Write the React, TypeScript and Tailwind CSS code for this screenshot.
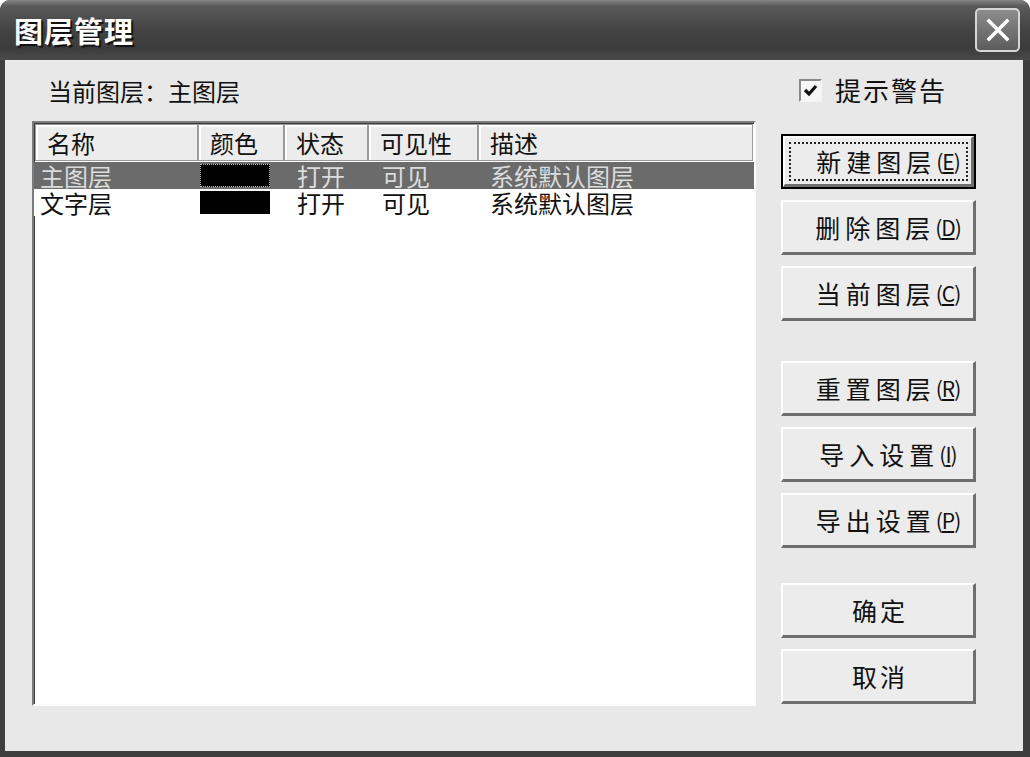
import React from 'react';

const FONT = { fontFamily: '"Noto Sans CJK SC", "Noto Sans", sans-serif' };

const columns = [
  { label: '名称', width: 'w-[163px]' },
  { label: '颜色', width: 'w-[86px]' },
  { label: '状态', width: 'w-[84px]' },
  { label: '可见性', width: 'w-[110px]' },
  { label: '描述', width: 'w-[275px]' },
];

const layers = [
  { name: '主图层', state: '打开', visible: '可见', desc: '系统默认图层', selected: true },
  { name: '文字层', state: '打开', visible: '可见', desc: '系统默认图层', selected: false },
];

type BtnProps = {
  text: string;
  hotkey?: string;
  isDefault?: boolean;
  className?: string;
};

const DialogButton: React.FC<BtnProps> = ({ text, hotkey, isDefault, className = '' }) => {
  return (
    <div
      className={`relative h-[55px] w-[195px] bg-[#ececec] ${
        isDefault ? 'border-2 border-black' : ''
      } ${className}`}
    >
      <div className="flex h-full w-full items-center justify-center border-t-2 border-l-2 border-b-[3px] border-r-[3px] border-t-white border-l-white border-b-[#6e6e6e] border-r-[#6e6e6e]">
        {hotkey ? (
          <span className="flex items-center pl-[20px] text-[25px] leading-[30px] text-[#111]">
            <span className="tracking-[5px]">{text}</span>
            <span className="text-[21px] tracking-[-1px]">
              (<span className="underline underline-offset-2">{hotkey}</span>)
            </span>
          </span>
        ) : (
          <span className="pl-[4px] text-[25px] leading-[30px] tracking-[3px] text-[#111]">{text}</span>
        )}
      </div>
      {isDefault && (
        <div className="pointer-events-none absolute inset-[6px] border-2 border-dotted border-[#222]" />
      )}
    </div>
  );
};

const App: React.FC = () => {
  return (
    <div className="min-h-screen bg-white" style={FONT}>
      <div className="flex h-[757px] w-[1030px] flex-col overflow-hidden rounded-t-[10px] bg-[#3e3e3e]">
        {/* Title bar */}
        <div className="flex h-[60px] shrink-0 items-center bg-[linear-gradient(to_bottom,#858585_0%,#5a5a5a_10%,#434343_50%,#3c3c3c_80%,#4a4a4a_100%)] pl-[14px] pr-[10px]">
          <span className="text-[29px] font-bold leading-none tracking-[1px] text-white [text-shadow:2px_2px_1px_#111]">
            图层管理
          </span>
          <div className="ml-auto flex h-[44px] w-[45px] items-center justify-center rounded-[5px] border-2 border-[#d6d6d6] bg-[linear-gradient(to_bottom,#8c8c8c,#5c5c5c)]">
            <svg width="28" height="28" viewBox="0 0 28 28">
              <path d="M5 5 L23 23 M23 5 L5 23" stroke="white" strokeWidth="3.5" strokeLinecap="square" />
            </svg>
          </div>
        </div>

        {/* Body */}
        <div className="mb-[6px] ml-[5px] mr-[7px] flex flex-1 bg-[#e8e8e8]">
          {/* Left column */}
          <div className="flex w-[751px] flex-col pl-[27px] pt-[17px]">
            <div className="h-[28px] pl-[16px] text-[24px] leading-[28px] text-[#111]">当前图层：主图层</div>
            <div className="mt-[16px] h-[585px] w-[724px] border-2 border-t-[#7c7c7c] border-l-[#7c7c7c] border-b-[#fbfbfb] border-r-[#fbfbfb] bg-white shadow-[inset_1px_1px_0_#3a3a3a]">
              {/* Header */}
              <div className="flex h-[38px] pt-[1px] pl-[1px]">
                {columns.map((c) => (
                  <div
                    key={c.label}
                    className={`${c.width} flex items-center border border-[#9a9a9a] bg-[#ececec] pl-[11px] text-[24px] leading-[30px] text-[#111] shadow-[inset_2px_2px_0_#ffffff]`}
                  >
                    {c.label}
                  </div>
                ))}
              </div>
              {/* Rows */}
              <div className="pt-[1px]">
                {layers.map((l) => (
                  <div
                    key={l.name}
                    className={`flex h-[27px] items-center text-[24px] leading-[27px] ${
                      l.selected ? 'bg-[#6b6b6b] text-[#dcdcdc]' : 'bg-white text-[#111]'
                    }`}
                  >
                    <div className="w-[163px] pl-[6px]">{l.name}</div>
                    <div className="flex w-[86px] items-center pl-[3px]">
                      <div
                        className={`h-[23px] w-[70px] bg-black ${
                          l.selected ? 'border border-dotted border-[#bbbbbb]' : ''
                        }`}
                      />
                    </div>
                    <div className="w-[84px] pl-[14px]">{l.state}</div>
                    <div className="w-[110px] pl-[15px]">{l.visible}</div>
                    <div className="w-[275px] pl-[13px]">{l.desc}</div>
                  </div>
                ))}
              </div>
            </div>
          </div>

          {/* Right column */}
          <div className="ml-[25px] flex w-[195px] flex-col pt-[16px]">
            <div className="flex h-[28px] items-center pl-[18px]">
              <div className="flex h-[23px] w-[23px] items-center justify-center border-2 border-t-[#8a8a8a] border-l-[#8a8a8a] border-b-[#f4f4f4] border-r-[#f4f4f4] bg-[#f6f6f6]">
                <svg width="15" height="15" viewBox="0 0 15 15">
                  <path d="M2 7 L6 11 L13 3" stroke="#111" strokeWidth="3.2" fill="none" />
                </svg>
              </div>
              <span className="ml-[13px] text-[26px] leading-[30px] tracking-[2px] text-[#111]">提示警告</span>
            </div>

            <div className="mt-[30px] flex flex-col gap-[11px]">
              <DialogButton text="新建图层" hotkey="E" isDefault />
              <DialogButton text="删除图层" hotkey="D" />
              <DialogButton text="当前图层" hotkey="C" />
              <DialogButton text="重置图层" hotkey="R" className="mt-[29px]" />
              <DialogButton text="导入设置" hotkey="I" />
              <DialogButton text="导出设置" hotkey="P" />
              <DialogButton text="确定" className="mt-[24px]" />
              <DialogButton text="取消" />
            </div>
          </div>
        </div>
      </div>
    </div>
  );
};

export default App;
